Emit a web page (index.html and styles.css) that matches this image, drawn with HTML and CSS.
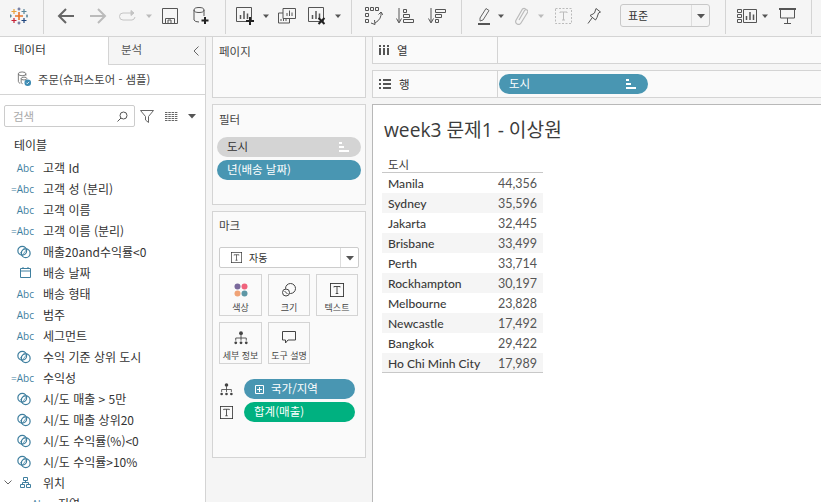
FILE: index.html
```html
<!DOCTYPE html>
<html lang="ko">
<head>
    <meta charset="UTF-8">
    <title>week3 문제1 - 이상원</title>
    <link rel="stylesheet" href="styles.css">
</head>
<body>
    <svg class="defs" width="0" height="0">
        <symbol id="i-calc" viewBox="0 0 16 16"><g fill="none" stroke="#3f7f9f" stroke-width="1.400"><circle cx="6" cy="6.500" r="5"/><circle cx="10" cy="9.500" r="5"/><path d="M3 10l6-7M6 12l5-7" stroke-width=".8"/></g></symbol>
        <symbol id="i-detail" viewBox="0 0 16 16"><g fill="#444"><circle cx="8" cy="2.500" r="2.200"/><circle cx="2" cy="13.500" r="1.600"/><circle cx="8" cy="13.500" r="1.600"/><circle cx="14" cy="13.500" r="1.600"/></g><path d="M8 4v7M2 11V8h12v3" fill="none" stroke="#444"/></symbol>
        <symbol id="i-text" viewBox="0 0 16 16"><g fill="none" stroke="#333"><rect x=".5" y=".5" width="15" height="15"/><path d="M4.500 5V4h7v1M8 4v8M6.500 12h3"/></g></symbol>
        <symbol id="i-sort" viewBox="0 0 10 10"><path d="M0 0h3v2H0zM0 4h5v2H0zM0 8h10v2H0z" fill="#fff"/></symbol>
        <symbol id="i-caret" viewBox="0 0 8 8"><path d="M0 2h8L4 6.500z" fill="currentColor"/></symbol>
    </svg>

    <header class="toolbar">
        <div class="tool-group group-logo">
            <svg width="18" height="18" viewBox="0 0 18 18" stroke-width="1.200" fill="none"><path d="M9 5v8M5 9h8" stroke="#e8762c" stroke-width="1.600"/><path d="M4 2v5M1.500 4.500h5" stroke="#e8a23c"/><path d="M14 2v5M11.500 4.500h5" stroke="#5b879b"/><path d="M4 11v5M1.500 13.500h5" stroke="#c72035"/><path d="M14 11v5M11.500 13.500h5" stroke="#1f457e"/><path d="M9 .5v3M7.500 2h3M9 14.500v3M7.500 16h3" stroke="#5b6591"/><path d="M.5 7.500v3M-1 9h3M17 7.500v3M16 9h3" stroke="#5b879b"/></svg>
        </div>
        <div class="tool-group group-nav">
            <svg width="18" height="16" viewBox="0 0 18 16" fill="none" stroke="#666" stroke-width="2"><path d="M17 8H2M9 1L2 8l7 7"/></svg>
            <svg width="18" height="16" viewBox="0 0 18 16" fill="none" stroke="#bbb" stroke-width="2"><path d="M1 8h15M9 1l7 7-7 7"/></svg>
            <svg width="18" height="12" viewBox="0 0 18 12" fill="none" stroke="#c4c4c4"><path d="M12 3H4a3.500 3.500 0 000 7h9a3.500 3.500 0 003-3"/><path d="M12 .5L15 3l-3 2.500z" fill="#c4c4c4"/></svg>
            <svg class="dim" width="6" height="6"><use href="#i-caret"/></svg>
            <svg width="16" height="16" viewBox="0 0 16 16" fill="none" stroke="#555"><path d="M.5.500h15v15H.5z"/><path d="M3.500 15V10.500h9V15M6 15v-3h3v3"/></svg>
            <svg width="16" height="18" viewBox="0 0 16 18" fill="none" stroke="#555"><ellipse cx="6" cy="3" rx="5" ry="2.500"/><path d="M1 3v10q1 2 5 2M11 3v6"/><path d="M12 10v7M8.500 13.500h7" stroke="#222" stroke-width="2"/></svg>
        </div>
        <div class="tool-group group-sheet">
            <svg width="18" height="18" viewBox="0 0 18 18" fill="none" stroke="#555"><path d="M.5.500h15v14H.5z"/><path d="M4.500 12V8M8 12V4M11.500 12V6.500" stroke-width="1.500"/><path d="M14 10v8M10 14h8" stroke="#222" stroke-width="2"/></svg>
            <svg width="6" height="6"><use href="#i-caret"/></svg>
            <svg width="18" height="16" viewBox="0 0 18 16" fill="none" stroke="#555"><path d="M5 .5h12.500v10H5z"/><path d="M9 8V5M11.500 8V2.500M14 8V4.500" /><path d="M5 5H.5v10h11v-4"/><path d="M3 13v-2M5.500 13v-3M8 13v-2"/></svg>
            <svg width="18" height="18" viewBox="0 0 18 18" fill="none" stroke="#555"><path d="M.5.500h15v14H.5z"/><path d="M4.500 12V8M8 12V4M11.500 12V6.500" stroke-width="1.500"/><path d="M10.500 11l6 6M16.500 11l-6 6" stroke="#222" stroke-width="2"/></svg>
            <svg width="6" height="6"><use href="#i-caret"/></svg>
        </div>
        <div class="tool-group group-sort">
            <svg width="18" height="18" viewBox="0 0 18 18" fill="none" stroke="#555"><path d="M.5.500h3v3h-3zM5.500.500h3v3h-3zM10.500.500h3v3h-3zM.5 6.500h3v3h-3zM.5 12.500h3v3h-3z"/><path d="M16 5q1 7-6 11M6 16l4 1.500L9.500 13M13.500 7.500L16 5l2 3"/></svg>
            <svg width="18" height="16" viewBox="0 0 18 16" fill="none" stroke="#555"><path d="M3 0v14M.5 10.500L3 15l2.500-4.500" /><path d="M7.500 1.500h3v3h-3zM7.500 6.500h6v3h-6zM7.500 11.500h10v3h-10z"/></svg>
            <svg width="18" height="16" viewBox="0 0 18 16" fill="none" stroke="#555"><path d="M3 0v14M.5 10.500L3 15l2.500-4.500" /><path d="M7.500 1.500h10v3h-10zM7.500 6.500h6v3h-6zM7.500 11.500h3v3h-3z"/></svg>
        </div>
        <div class="tool-group group-format">
            <svg width="14" height="18" viewBox="0 0 14 18" fill="none" stroke="#666"><path d="M3 11L9 1.500l3 2L6 13l-3 1z"/><path d="M1 17h12" stroke="#555" stroke-width="2"/></svg>
            <svg width="6" height="6"><use href="#i-caret"/></svg>
            <svg width="14" height="18" viewBox="0 0 14 18" fill="none" stroke="#bbb" stroke-width="1.200"><path d="M5 13L10.500 3.500a1.800 1.800 0 013 2L7 16a2.800 2.800 0 01-5-2.800L8.500 2a2.600 2.600 0 014 1"/></svg>
            <svg class="dim" width="6" height="6"><use href="#i-caret"/></svg>
            <svg width="17" height="16" viewBox="0 0 17 16" fill="none" stroke="#bbb"><path d="M.5.500h16v15H.5z" stroke-dasharray="2 1.500"/><path d="M5 5V4h7v1M8.500 4v8M7 12h3"/></svg>
            <svg width="14" height="16" viewBox="0 0 14 16" fill="none" stroke="#555"><path d="M9 .5l4.500 3.500-2 1-1.500 4.500L8.500 12 3 7.500l3-1.500 1.500-1zM5 10l-4 5.500"/></svg>
            <div class="fit-select">
                <span class="fit-label">표준</span>
                <span class="fit-arrow"><svg width="8" height="8"><use href="#i-caret"/></svg></span>
            </div>
        </div>
        <div class="tool-group group-show">
            <svg width="20" height="14" viewBox="0 0 20 14" fill="none" stroke="#555"><path d="M.5.500h4v3h-4zM.5 5.500h4v3h-4zM.5 10.500h4v3h-4zM6.500.500h13v13h-13z"/><path d="M9.500 11V7M13 11V3M16.500 11V5.500" stroke-width="1.500"/></svg>
            <svg width="6" height="6"><use href="#i-caret"/></svg>
            <svg width="17" height="16" viewBox="0 0 17 16" fill="none" stroke="#555"><path d="M0 1h17" stroke-width="2"/><path d="M1.500 1v9h14V1M8.500 10v5M5 15.500h7"/></svg>
        </div>
    </header>

    <main class="workspace">
        <aside class="sidebar">
            <div class="tabs">
                <div class="tab tab-active">데이터</div>
                <div class="tab">분석<span class="tab-chevron">
                    <svg width="6" height="10" viewBox="0 0 6 10" fill="none" stroke="#666"><path d="M5.500.5L1 5l4.500 4.500"/></svg>
                </span></div>
            </div>
            <div class="source">
                <svg width="16" height="16" viewBox="0 0 16 17" fill="none" stroke="#666" stroke-width=".9"><ellipse cx="6" cy="3" rx="4" ry="2"/><path d="M2 3v8c0 1 1 2 2 2M10 3v2"/><ellipse cx="8" cy="8" rx="3" ry="1.500"/><path d="M5 8v4c0 1 1 1.500 1.500 1.500"/><circle cx="12" cy="12.500" r="3.500" fill="#3d8bb3" stroke="none"/><path d="M10.500 12.500l1 1 2-2" stroke="#fff"/></svg>
                <span>주문(슈퍼스토어 - 샘플)</span>
            </div>
            <div class="search-row">
                <div class="search-box">
                    <span>검색</span>
                    <svg width="11" height="11" viewBox="0 0 11 11" fill="none" stroke="#555"><circle cx="6.500" cy="4.500" r="3.500"/><path d="M4 7l-3.500 3.500"/></svg>
                </div>
                <svg class="search-filter" width="14" height="13" viewBox="0 0 14 13" fill="none" stroke="#666"><path d="M.5.500h13L8.500 6.500V12.500L5.500 10V6.500z"/></svg>
                <svg class="search-grid" width="13" height="9" viewBox="0 0 13 9" stroke="#666"><path d="M0 .5h13M0 2.500h13M0 4.500h13M0 6.500h13M0 8.500h13" stroke-dasharray="2.500 .8"/></svg>
                <svg class="search-caret" width="8" height="8"><use href="#i-caret"/></svg>
            </div>
            <h3 class="list-title">테이블</h3>
            <ul class="fields">
                <li><span class="abc">Abc</span>고객 Id</li>
                <li><span class="abc">=Abc</span>고객 성 (분리)</li>
                <li><span class="abc">Abc</span>고객 이름</li>
                <li><span class="abc">=Abc</span>고객 이름 (분리)</li>
                <li><span class="abc"><svg width="14" height="14"><use href="#i-calc"/></svg></span>매출20and수익률&lt;0</li>
                <li><span class="abc"><svg width="11" height="11" viewBox="0 0 11 11" fill="none" stroke="#3f7f9f"><path d="M.5 1.500h10v9H.5zM.5 4h10M3 0v2M8 0v2"/></svg></span>배송 날짜</li>
                <li><span class="abc">Abc</span>배송 형태</li>
                <li><span class="abc">Abc</span>범주</li>
                <li><span class="abc">Abc</span>세그먼트</li>
                <li><span class="abc"><svg width="14" height="14"><use href="#i-calc"/></svg></span>수익 기준 상위 도시</li>
                <li><span class="abc">=Abc</span>수익성</li>
                <li><span class="abc"><svg width="14" height="14"><use href="#i-calc"/></svg></span>시/도 매출 &gt; 5만</li>
                <li><span class="abc"><svg width="14" height="14"><use href="#i-calc"/></svg></span>시/도 매출 상위20</li>
                <li><span class="abc"><svg width="14" height="14"><use href="#i-calc"/></svg></span>시/도 수익률(%)&lt;0</li>
                <li><span class="abc"><svg width="14" height="14"><use href="#i-calc"/></svg></span>시/도 수익률&gt;10%</li>
                <li class="field-group">
                    <svg class="fold" width="8" height="5" viewBox="0 0 8 5" fill="none" stroke="#666"><path d="M.5.5L4 4 7.500.5"/></svg>
                    <span class="abc"><svg width="11" height="11" viewBox="0 0 11 11" fill="none" stroke="#3f7f9f"><path d="M3.500.5h4v3h-4zM.5 7.500h4v3h-4zM6.500 7.500h4v3h-4zM5.500 3.500v2M2.500 7.500v-2h6v2"/></svg></span>위치
                </li>
                <li class="field-child"><span class="abc">Abc</span>지역</li>
            </ul>
        </aside>

        <section class="cards">
            <div class="card card-pages"><h4 class="card-title">페이지</h4></div>
            <div class="card card-filters">
                <h4 class="card-title">필터</h4>
                <div class="pill pill-gray">도시<svg width="10" height="10"><use href="#i-sort"/></svg></div>
                <div class="pill pill-blue">년(배송 날짜)</div>
            </div>
            <div class="card card-marks">
                <h4 class="card-title">마크</h4>
                <div class="mark-select">
                    <span class="mark-type"><svg width="11" height="11"><use href="#i-text"/></svg>자동</span>
                    <span class="mark-arrow"><svg width="8" height="8"><use href="#i-caret"/></svg></span>
                </div>
                <div class="mark-buttons">
                    <div class="mark-btn">
                        <svg width="14" height="14" viewBox="0 0 14 14"><circle cx="3.500" cy="3.500" r="3" fill="#7b6a9c"/><circle cx="10.500" cy="3.500" r="3" fill="#f0637c"/><circle cx="3.500" cy="10.500" r="3" fill="#f0a377"/><circle cx="10.500" cy="10.500" r="3" fill="#5e97a5"/></svg>
                        <span>색상</span>
                    </div>
                    <div class="mark-btn">
                        <svg width="14" height="14" viewBox="0 0 14 14" fill="none" stroke="#444"><circle cx="8.500" cy="5.500" r="5"/><circle cx="4" cy="9.500" r="3.500" fill="#fafafa"/><path d="M2.500 8l3 3"/></svg>
                        <span>크기</span>
                    </div>
                    <div class="mark-btn">
                        <svg width="14" height="14"><use href="#i-text"/></svg>
                        <span>텍스트</span>
                    </div>
                    <div class="mark-btn">
                        <svg width="14" height="14"><use href="#i-detail"/></svg>
                        <span>세부 정보</span>
                    </div>
                    <div class="mark-btn">
                        <svg width="14" height="13" viewBox="0 0 14 13" fill="none" stroke="#444"><path d="M.5.500h13v8.500H6L3.500 12V9h-3z"/></svg>
                        <span>도구 설명</span>
                    </div>
                </div>
                <div class="mark-row">
                    <svg width="13" height="13"><use href="#i-detail"/></svg>
                    <div class="pill pill-blue pill-plus"><svg width="9" height="9" viewBox="0 0 9 9" fill="none" stroke="#fff"><path d="M.5.500h8v8h-8zM4.500 2v5M2 4.500h5"/></svg>국가/지역</div>
                </div>
                <div class="mark-row">
                    <svg width="13" height="13"><use href="#i-text"/></svg>
                    <div class="pill pill-green">합계(매출)</div>
                </div>
            </div>
        </section>

        <section class="stage">
            <div class="shelf">
                <div class="shelf-label">
                    <svg width="10" height="10" viewBox="0 0 10 10" fill="#555"><path d="M0 3h2v7H0zM4 3h2v7H4zM8 3h2v7H8zM0 0h2v2H0zM4 0h2v2H4zM8 0h2v2H8z"/></svg>
                    <span>열</span>
                </div>
            </div>
            <div class="shelf">
                <div class="shelf-label">
                    <svg width="12" height="10" viewBox="0 0 12 10" fill="#555"><path d="M0 0h2v2H0zM0 4h2v2H0zM0 8h2v2H0zM4 0h8v2H4zM4 4h8v2H4zM4 8h8v2H4z"/></svg>
                    <span>행</span>
                </div>
                <div class="pill pill-blue pill-city">도시<svg width="10" height="10"><use href="#i-sort"/></svg></div>
            </div>
            <div class="view">
                <h1 class="view-title">week3 문제1 - 이상원</h1>
                <table class="crosstab">
                    <thead><tr><th colspan="2">도시</th></tr></thead>
                    <tbody>
                        <tr><td>Manila</td><td>44,356</td></tr>
                        <tr><td>Sydney</td><td>35,596</td></tr>
                        <tr><td>Jakarta</td><td>32,445</td></tr>
                        <tr><td>Brisbane</td><td>33,499</td></tr>
                        <tr><td>Perth</td><td>33,714</td></tr>
                        <tr><td>Rockhampton</td><td>30,197</td></tr>
                        <tr><td>Melbourne</td><td>23,828</td></tr>
                        <tr><td>Newcastle</td><td>17,492</td></tr>
                        <tr><td>Bangkok</td><td>29,422</td></tr>
                        <tr><td>Ho Chi Minh City</td><td>17,989</td></tr>
                    </tbody>
                </table>
            </div>
        </section>
    </main>
</body>
</html>
```

FILE: styles.css
```css
* {
    box-sizing: border-box;
}

body {
    margin: 0;
    height: 100vh;
    overflow: hidden;
    display: flex;
    flex-direction: column;
    background: #f5f5f5;
    color: #333;
    font-family: "Noto Sans CJK KR", "Open Sans", sans-serif;
    font-size: 12px;
}

.defs {
    position: absolute;
}

/* toolbar */
.toolbar {
    display: flex;
    height: 37px;
    flex: none;
    background: #f5f5f5;
    border-bottom: 1px solid #d4d4d4;
    color: #555;
}

.dim {
    color: #bbb;
}

.tool-group {
    display: grid;
    height: 34px;
    padding-bottom: 3px;
    align-items: center;
    justify-items: center;
    border-right: 1px solid #d4d4d4;
}

.group-logo {
    width: 44px;
    grid-template-columns: 38px;
    justify-content: start;
}

.group-nav {
    width: 182px;
    padding-left: 6px;
    grid-template-columns: 32px 32px 28px 14px 28px 34px;
}

.group-sheet {
    width: 126px;
    padding-left: 4px;
    grid-template-columns: 30px 12px 30px 30px 12px;
}

.group-sort {
    width: 110px;
    padding-left: 6px;
    grid-template-columns: 31px 32px 32px;
}

.group-format {
    width: 264px;
    padding-left: 8px;
    grid-template-columns: 28px 6px 34px 6px 38px 24px 90px;
}

.group-show {
    width: 86px;
    padding-left: 6px;
    grid-template-columns: 30px 6px 38px;
}

.fit-select {
    display: flex;
    width: 90px;
    height: 23px;
    margin-left: 28px;
    background: #f5f5f5;
    border: 1px solid #c8c8c8;
    border-radius: 3px;
}

.fit-label {
    flex: 1;
    padding-left: 7px;
    line-height: 20px;
    font-size: 11px;
    color: #333;
}

.fit-arrow {
    display: flex;
    width: 18px;
    align-items: center;
    justify-content: center;
    border-left: 1px solid #ddd;
}

/* layout */
.workspace {
    flex: 1;
    display: flex;
    min-height: 0;
}

.sidebar {
    width: 206px;
    flex: none;
    background: #fff;
    border-right: 1px solid #d4d4d4;
    overflow: hidden;
}

.tabs {
    display: flex;
    height: 28px;
}

.tab {
    position: relative;
    padding: 4px 0 0 14px;
    font-size: 11.500px;
}

.tab-active {
    width: 109px;
    background: #fff;
    border-right: 1px solid #d4d4d4;
}

.tab:not(.tab-active) {
    flex: 1;
    padding-left: 12px;
    background: #f5f5f5;
    border-bottom: 1px solid #d4d4d4;
    color: #555;
}

.tab-chevron {
    position: absolute;
    right: 6px;
    top: 6px;
}

.source {
    display: flex;
    align-items: center;
    gap: 6px;
    height: 30px;
    padding: 0 0 2px 16px;
    border-bottom: 1px solid #d4d4d4;
    font-size: 11.400px;
    color: #444;
}

.search-row {
    display: flex;
    align-items: center;
    height: 43px;
    padding: 0 0 1px 4px;
    color: #555;
}

.search-box {
    display: flex;
    align-items: center;
    justify-content: space-between;
    width: 131px;
    height: 22px;
    padding: 0 6px 0 8px;
    border: 1px solid #ccc;
    border-radius: 2px;
    font-size: 11.500px;
    color: #aaa;
}

.search-filter {
    margin-left: 5px;
}

.search-grid {
    margin-left: 11px;
}

.search-caret {
    margin-left: 10px;
}

.list-title {
    margin: 0;
    height: 19px;
    padding-left: 14px;
    font-weight: 400;
    font-size: 12px;
    line-height: 14px;
}

.fields {
    margin: 0;
    padding: 0;
    list-style: none;
}

.fields li {
    position: relative;
    display: flex;
    align-items: center;
    height: 21px;
    white-space: nowrap;
}

.abc {
    display: flex;
    width: 43px;
    padding-right: 9px;
    justify-content: flex-end;
    font-family: "Open Sans", sans-serif;
    font-size: 10px;
    color: #3f7f9f;
}

.abc svg {
    margin-right: 3px;
}

.fold {
    position: absolute;
    left: 4px;
    top: 8px;
}

.fields .field-child {
    padding-left: 15px;
}

/* middle column */
.cards {
    width: 166px;
    flex: none;
    display: flex;
    flex-direction: column;
    gap: 6px;
    padding: 0 0 0 6px;
    height: 421px;
}

.card {
    width: 154px;
    background: #fafafa;
    border: 1px solid #d4d4d4;
    padding: 0 4px;
}

.card-pages {
    height: 61px;
    border-top: 0;
}

.card-filters {
    height: 101px;
}

.card-marks {
    height: 247px;
}

.card-title {
    margin: 0;
    padding: 5px 2px 0;
    font-size: 11.500px;
    font-weight: 400;
    line-height: 18px;
    color: #444;
}

.card-filters .card-title {
    height: 32px;
    padding-top: 5px;
}

.card-marks .card-title {
    height: 35px;
    padding-top: 4px;
}

.pill {
    display: flex;
    align-items: center;
    justify-content: space-between;
    height: 20px;
    padding: 0 12px 2px 10px;
    border-radius: 10px;
    font-size: 11.500px;
    color: #fff;
}

.pill svg {
    margin-bottom: -2px;
}

.pill-gray {
    background: #d4d4d4;
    color: #333;
    margin-bottom: 3px;
}

.pill-blue {
    background: #4996b2;
}

.pill-green {
    background: #00b180;
}

.pill-plus {
    justify-content: flex-start;
    gap: 7px;
    padding-left: 11px;
}

.pill-city {
    width: 149px;
    margin: 3px 0 0 1px;
}

.mark-select {
    display: flex;
    width: 140px;
    height: 21px;
    margin-left: 2px;
    background: #fff;
    border: 1px solid #ccc;
    border-radius: 2px;
}

.mark-type {
    flex: 1;
    display: flex;
    align-items: center;
    gap: 7px;
    padding-left: 11px;
    font-size: 10px;
}

.mark-arrow {
    display: flex;
    width: 18px;
    align-items: center;
    justify-content: center;
    border-left: 1px solid #ddd;
    color: #555;
}

.mark-buttons {
    display: grid;
    grid-template-columns: 43px 42px 42px;
    grid-auto-rows: 42px;
    gap: 6px;
    margin: 6px 0 15px 2px;
}

.mark-btn {
    display: flex;
    flex-direction: column;
    align-items: center;
    justify-content: space-between;
    padding: 8px 0 2px;
    border: 1px solid #d4d4d4;
    font-size: 9px;
    line-height: 11px;
    white-space: nowrap;
    color: #444;
}

.mark-row {
    display: flex;
    align-items: center;
    gap: 11px;
    height: 20px;
    margin: 0 6px 3px 3px;
}

.mark-row .pill {
    flex: 1;
}

/* shelves and view */
.stage {
    flex: 1;
    display: flex;
    flex-direction: column;
    min-width: 0;
}

.shelf {
    display: flex;
    height: 27px;
    flex: none;
    margin-bottom: 6px;
    background: #fafafa;
    border-left: 1px solid #d4d4d4;
    border-bottom: 1px solid #d4d4d4;
}

.shelf + .shelf {
    height: 28px;
    border-top: 1px solid #d4d4d4;
}

.shelf-label {
    display: flex;
    align-items: center;
    gap: 8px;
    width: 125px;
    flex: none;
    padding: 0 0 1px 6px;
    border-right: 1px solid #d4d4d4;
    font-size: 11.500px;
}

.view {
    flex: 1;
    background: #fff;
    border-left: 1px solid #b8b8b8;
    border-top: 1px solid #b8b8b8;
    padding: 12px 0 0 9px;
}

.view-title {
    margin: 0 0 13px 2px;
    font-family: "Open Sans", "Noto Sans CJK KR", sans-serif;
    font-size: 19.200px;
    font-weight: 400;
    line-height: 26px;
    color: #3c3c3c;
}

.crosstab {
    width: 161px;
    border-collapse: collapse;
    font-family: "Lato", "Noto Sans CJK KR", sans-serif;
    font-size: 12.100px;
    font-weight: 500;
    color: #3a3a3a;
}

.crosstab th {
    height: 16px;
    padding: 0 0 0 6px;
    border-bottom: 1px solid #c8c8c8;
    font-family: "Noto Sans CJK KR", sans-serif;
    font-weight: 400;
    font-size: 11.500px;
    text-align: left;
}

.crosstab td {
    height: 20px;
    padding: 2px 6px 0;
}

.crosstab td + td {
    text-align: right;
    font-size: 12.500px;
    font-weight: 400;
    color: #555;
}

.crosstab tbody tr:nth-child(even) {
    background: #f5f5f5;
}

.crosstab tbody tr:last-child {
    border-bottom: 1px solid #c8c8c8;
}
```
